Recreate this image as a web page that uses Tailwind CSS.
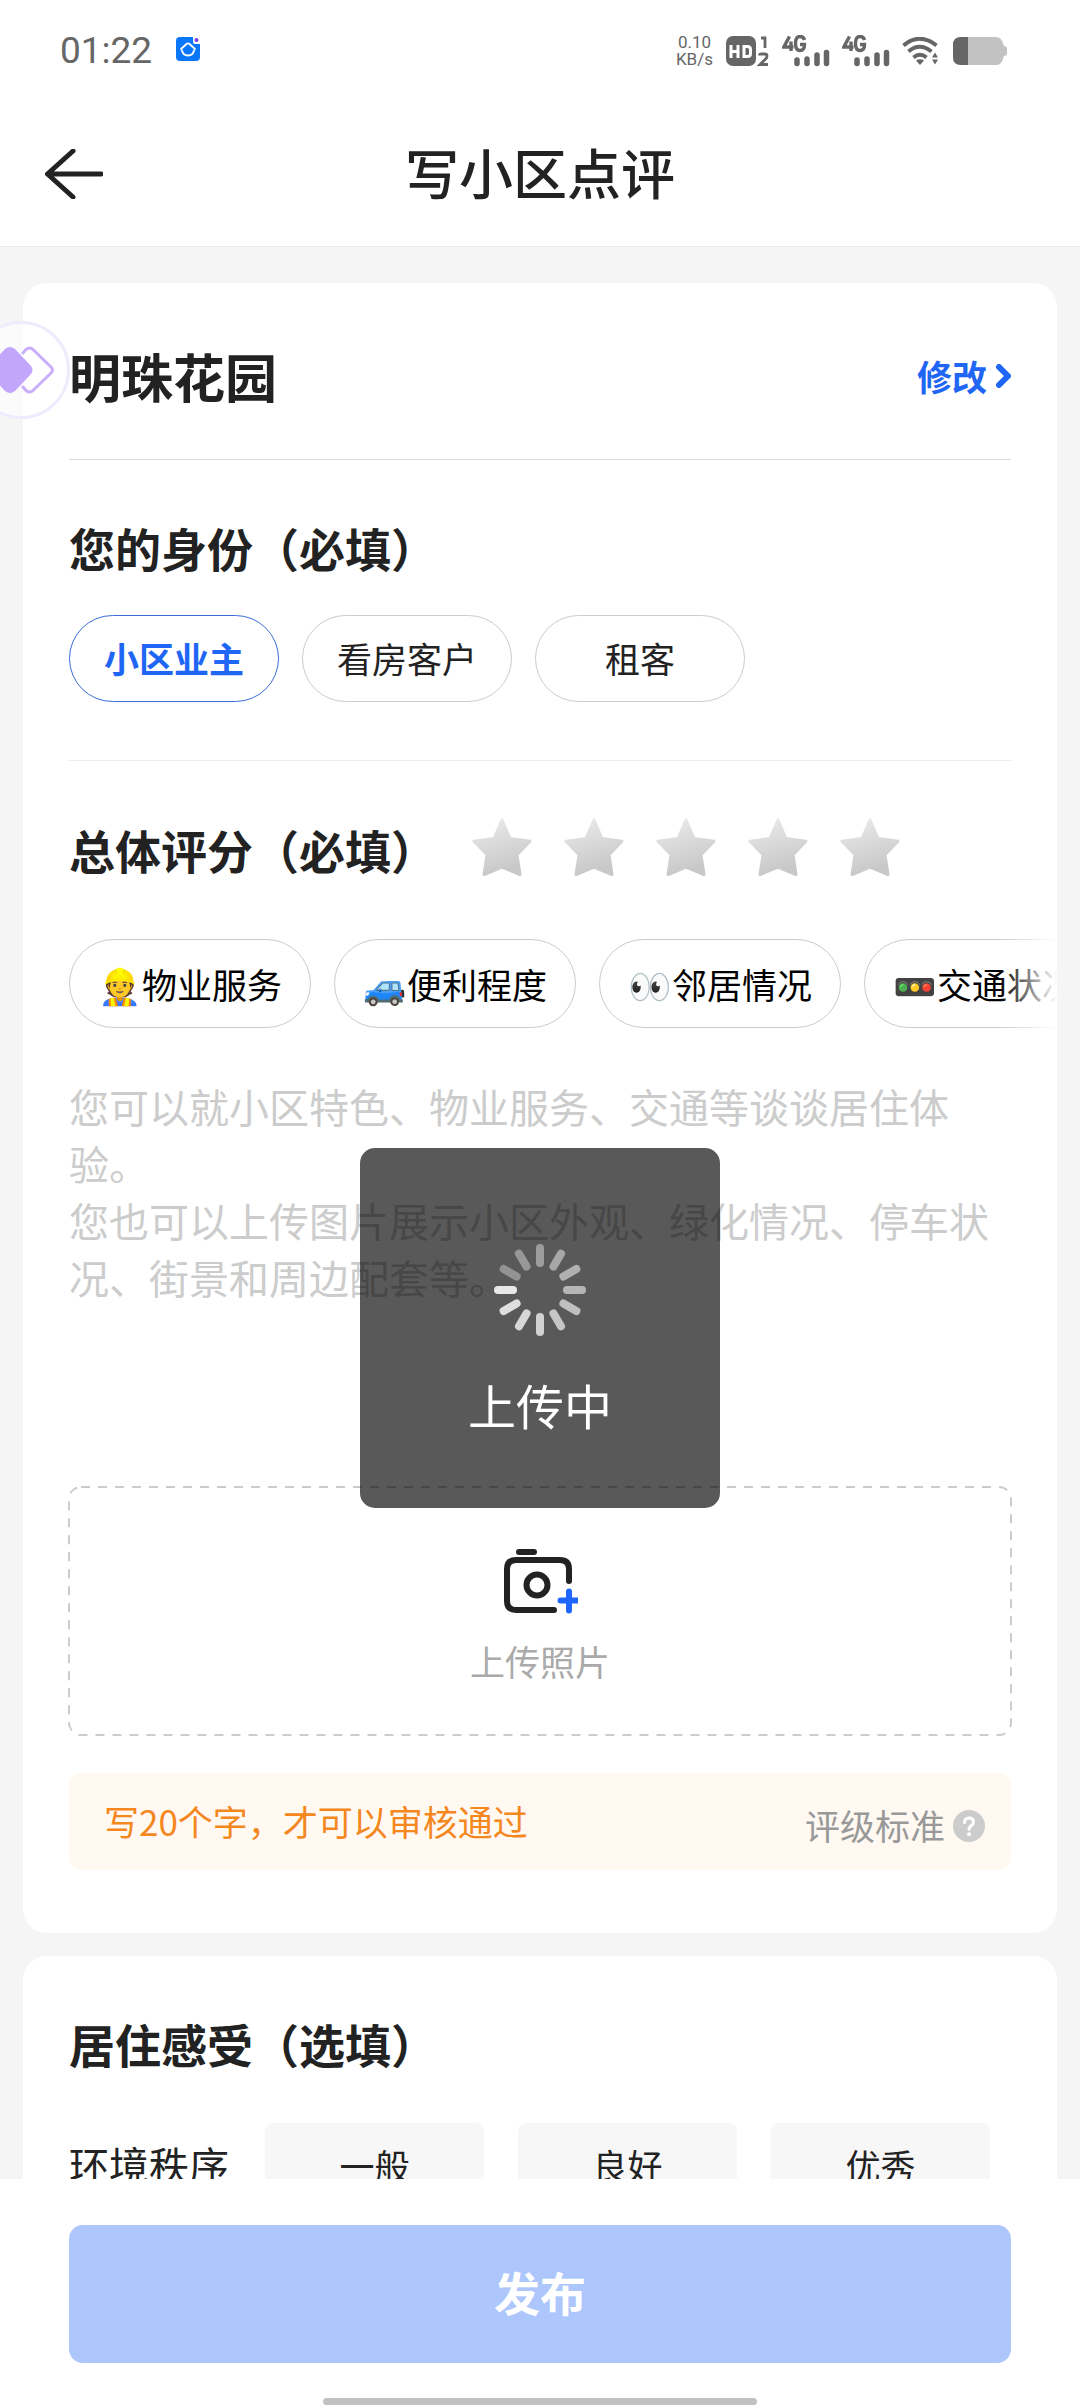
<!DOCTYPE html>
<html lang="zh-CN">
<head>
<meta charset="utf-8">
<meta name="viewport" content="width=device-width, initial-scale=1">
<title>写小区点评</title>
<script src="https://cdn.jsdelivr.net/npm/@tailwindcss/browser@4"></script>
</head>
<body class="flex h-screen flex-col bg-white font-['Noto_Sans_CJK_SC',sans-serif] text-[#222222]">

<!-- Status bar -->
<div class="flex h-[102px] shrink-0 items-center justify-between pl-[60px] pr-[73px] font-['Roboto','Noto_Sans_CJK_SC',sans-serif] text-[#666666]">
  <div class="flex items-center gap-6">
    <span class="text-[37px] leading-[44px]">01:22</span>
    <svg class="mb-1 h-6 w-6" viewBox="0 0 24 24" aria-hidden="true">
      <rect width="24" height="24" rx="4" fill="#0a77fb"/>
      <path d="M5 12l5.500-5q1.500-1.200 3 0l5.500 5" fill="none" stroke="#fff" stroke-width="1.800" stroke-linecap="round"/>
      <path d="M6 13.500q1 5 6 5t6-5" fill="none" stroke="#fff" stroke-width="1.800" stroke-linecap="round"/>
      <path d="M17 0h7v7h-5a2 2 0 0 1-2-2z" fill="#fff"/>
      <circle cx="20.500" cy="3" r="2" fill="#7a3cf0"/>
    </svg>
  </div>
  <div class="flex items-center">
    <div class="mr-[13px] flex flex-col text-center text-[17px] leading-[17px]"><span>0.10</span><span>KB/s</span></div>
    <svg class="mr-3 h-8 w-11" viewBox="0 0 44 32" aria-hidden="true">
      <rect x="0" y="1" width="30" height="30" rx="7" fill="#666"/>
      <path d="M5 10v13M12 10v13M5 16.500h7M18 11.500v10h3.500q3 0 3-3v-4q0-3-3-3z" fill="none" stroke="#fff" stroke-width="3"/>
      <path d="M35 3h4v10M33.500 20.500q0-1.500 2-1.500h3q2.500 0 2.500 2t-2 3.500l-5 5h8" fill="none" stroke="#666" stroke-width="2.800"/>
    </svg>
    <svg class="mr-3 h-8 w-12" viewBox="0 0 48 32" aria-hidden="true">
      <path d="M7.500 1.500L1.800 12h9.700M9 6.500V16M22.500 5q-1-3.500-4.500-3.500-4.500 0-4.500 7t4.500 7q4.500 0 4.500-6h-4.500" fill="none" stroke="#666" stroke-width="3.400"/>
      <path d="M15 25v3.500M25 24v4.500M35 20v8.500M44.500 17.500v11" stroke="#666" stroke-width="5.500" stroke-linecap="round"/>
    </svg>
    <svg class="mr-3 h-8 w-12" viewBox="0 0 48 32" aria-hidden="true">
      <path d="M7.500 1.500L1.800 12h9.700M9 6.500V16M22.500 5q-1-3.500-4.500-3.500-4.500 0-4.500 7t4.500 7q4.500 0 4.500-6h-4.500" fill="none" stroke="#666" stroke-width="3.400"/>
      <path d="M15 25v3.500M25 24v4.500M35 20v8.500M44.500 17.500v11" stroke="#666" stroke-width="5.500" stroke-linecap="round"/>
    </svg>
    <svg class="mr-[15px] h-7 w-9" viewBox="0 0 36 28" aria-hidden="true">
      <path d="M1.500 8.500q16-13.500 33 0M6.500 14.500q11-9.500 23 0M11.500 20.500q6.500-5.500 13 0" fill="none" stroke="#666" stroke-width="4"/>
      <path d="M14 23.500q4-2.500 8 0l-4 4.500zM33 15.500l3 5h-6zM33 27.500l3-5h-6z" fill="#666"/>
    </svg>
    <svg class="h-7 w-[54px]" viewBox="0 0 54 28" aria-hidden="true">
      <path d="M8 0h35q5 0 7 6l1 3q3 0 3 3v4q0 3-3 3l-1 3q-2 6-7 6H8q-8 0-8-8V8q0-8 8-8z" fill="#c2c2c2"/>
      <path d="M15 0H8Q0 0 0 8v12q0 8 8 8h7z" fill="#666"/>
    </svg>
  </div>
</div>

<!-- Title bar -->
<header class="grid h-[145px] shrink-0 grid-cols-[1fr_auto_1fr] items-center border-b border-[#ebebeb] px-[45px]">
  <button type="button" aria-label="返回" class="justify-self-start">
    <svg class="h-[50px] w-[58px]" viewBox="0 0 58 50" fill="none" stroke="#222" stroke-width="5" stroke-linecap="round" stroke-linejoin="round" aria-hidden="true"><path d="M28 2L2.500 25 28 48M3 25h53"/></svg>
  </button>
  <h1 class="pb-1 text-[54px] font-medium leading-[80px]">写小区点评</h1>
</header>

<main class="min-h-0 flex-1 overflow-y-auto bg-[#f5f5f5] px-[23px] pt-9 [scrollbar-width:none]">
  <!-- Review card -->
  <section class="rounded-[24px] bg-white px-[46px] pb-[63px]">
    <div class="flex items-center justify-between border-b border-[#dcdcdc] pb-[53px] pt-[63px]">
      <h2 class="text-[52px] font-bold leading-[60px]">明珠花园</h2>
      <a href="#community" class="flex items-center gap-2 text-[35px] font-bold leading-[60px] text-[#1f66f5]">修改
        <svg class="h-6 w-4" viewBox="0 0 16 24" fill="none" stroke="currentColor" stroke-width="6" stroke-linecap="round" stroke-linejoin="round" aria-hidden="true"><path d="M4 3l9 9-9 9"/></svg>
      </a>
    </div>

    <fieldset class="border-b border-[#ebebeb] pb-[58px] pt-[57px]">
      <legend class="float-left w-full text-[46px] font-bold leading-[60px]">您的身份（必填）</legend>
      <div class="clear-both flex gap-[23px] pt-[38px] text-[35px]">
        <label class="flex h-[87px] w-[210px] items-center justify-center rounded-full border border-[#cccccc] has-checked:border-[#3a6fd8] has-checked:font-bold has-checked:text-[#1f66f5]"><input type="radio" name="identity" class="sr-only" checked>小区业主</label>
        <label class="flex h-[87px] w-[210px] items-center justify-center rounded-full border border-[#cccccc] has-checked:border-[#3a6fd8] has-checked:font-bold has-checked:text-[#1f66f5]"><input type="radio" name="identity" class="sr-only">看房客户</label>
        <label class="flex h-[87px] w-[210px] items-center justify-center rounded-full border border-[#cccccc] has-checked:border-[#3a6fd8] has-checked:font-bold has-checked:text-[#1f66f5]"><input type="radio" name="identity" class="sr-only">租客</label>
      </div>
    </fieldset>

    <div class="flex items-center pt-[56px]">
      <h3 class="w-[403px] shrink-0 text-[46px] font-bold leading-[60px]">总体评分（必填）</h3>
      <div class="flex gap-8 pb-1" id="stars"></div>
    </div>

    <div class="relative -mx-[46px] mt-[58px]">
      <div class="flex gap-[23px] overflow-hidden px-[46px] text-[35px] text-black">
        <button type="button" class="flex h-[89px] w-[242px] shrink-0 items-center justify-center whitespace-nowrap rounded-full border border-[#cccccc] pt-0.5">👷物业服务</button>
        <button type="button" class="flex h-[89px] w-[242px] shrink-0 items-center justify-center whitespace-nowrap rounded-full border border-[#cccccc] pt-0.5">🚙便利程度</button>
        <button type="button" class="flex h-[89px] w-[242px] shrink-0 items-center justify-center whitespace-nowrap rounded-full border border-[#cccccc] pt-0.5">👀邻居情况</button>
        <button type="button" class="flex h-[89px] w-[242px] shrink-0 items-center justify-center whitespace-nowrap rounded-full border border-[#cccccc] pt-0.5">🚥交通状况</button>
      </div>
      <div class="pointer-events-none absolute inset-y-0 right-0 w-[58px] bg-linear-to-r from-white/0 to-white"></div>
    </div>

    <textarea aria-label="点评内容" class="mt-[50px] block h-[374px] w-full resize-none overflow-hidden text-[40px] leading-[57px] outline-none placeholder:text-[#cccccc]" placeholder="您可以就小区特色、物业服务、交通等谈谈居住体验。&#10;您也可以上传图片展示小区外观、绿化情况、停车状况、街景和周边配套等。"></textarea>

    <button type="button" class="relative mt-[35px] flex h-[248px] w-full flex-col items-center justify-center gap-[22px] pt-3">
      <svg class="absolute inset-0 h-full w-full overflow-visible" fill="none" stroke="#cccccc" stroke-width="2" stroke-dasharray="9 8" aria-hidden="true"><rect width="100%" height="100%" rx="12"/></svg>
      <svg class="h-[66px] w-[76px]" viewBox="0 0 76 66" fill="none" stroke="#222" stroke-width="6" stroke-linecap="round" stroke-linejoin="round" aria-hidden="true">
        <path d="M17 4h15M67 33V21q0-9-9-9H14q-9 0-9 9v32q0 9 9 9h38"/>
        <circle cx="35" cy="37" r="10.500"/>
        <path d="M58.500 52.500h17M67 43.500v19" stroke="#1f66ff"/>
      </svg>
      <span class="text-[35px] leading-[50px] text-[#aaaaaa]">上传照片</span>
    </button>

    <div class="mt-[38px] flex h-[97px] items-center justify-between rounded-xl bg-[#fff9f2] pl-[35px] pr-[26px] text-[35px]">
      <p class="text-[#f5871f]">写20个字，才可以审核通过</p>
      <a href="#standard" class="flex items-center gap-2 pt-2 text-[#999999]">评级标准
        <svg class="h-8 w-8" viewBox="0 0 32 32" aria-hidden="true"><circle cx="16" cy="16" r="16" fill="#cccccc"/><path d="M11.500 12.500q0-4.500 4.500-4.500t4.500 4q0 2.200-2.300 3.700T16 19.500" fill="none" stroke="#fff" stroke-width="3" stroke-linecap="round"/><circle cx="16" cy="24.300" r="2" fill="#fff"/></svg>
      </a>
    </div>
  </section>

  <!-- Living experience card -->
  <section class="mt-[23px] rounded-[24px] bg-white px-[46px] pb-[60px] pt-[57px]">
    <h3 class="text-[46px] font-bold leading-[60px]">居住感受（选填）</h3>
    <div role="radiogroup" aria-labelledby="order-label" class="mt-[50px] flex items-center">
      <span id="order-label" class="w-[196px] shrink-0 pb-1.5 text-[40px]">环境秩序</span>
      <div class="flex gap-[34px] text-[35px]">
        <label class="flex h-[87px] w-[219px] items-center justify-center rounded-lg bg-[#f7f7f7] pb-0.5"><input type="radio" name="order" class="sr-only">一般</label>
        <label class="flex h-[87px] w-[219px] items-center justify-center rounded-lg bg-[#f7f7f7] pb-0.5"><input type="radio" name="order" class="sr-only">良好</label>
        <label class="flex h-[87px] w-[219px] items-center justify-center rounded-lg bg-[#f7f7f7] pb-0.5"><input type="radio" name="order" class="sr-only">优秀</label>
      </div>
    </div>
  </section>
</main>

<!-- Submit bar -->
<footer class="flex shrink-0 flex-col items-center bg-white px-[69px] pb-[3px] pt-[46px]">
  <button type="button" class="h-[138px] w-full rounded-[14px] bg-[#adc6fc] pb-1.5 text-[46px] font-bold text-white">发布</button>
  <div class="mt-[35px] h-[7px] w-[46%] rounded-full bg-[#c1c1c1]"></div>
</footer>

<!-- Floating assistant handle -->
<div class="fixed -left-[28px] top-[321px] flex h-[98px] w-[98px] items-center justify-center rounded-full border-3 border-[#efeafc] bg-white/60">
  <svg class="h-12 w-[66px]" viewBox="0 0 66 48" fill="none" stroke="#c9aefb" stroke-width="3" stroke-linecap="round" stroke-linejoin="round" aria-hidden="true">
    <path d="M17 3q5-4 10 0l16 17q3 4 0 8L27 45q-5 4-10 0L1 28q-3-4 0-8z" fill="#c2a6fb" stroke="none"/>
    <path d="M35 7l3-3.500q4-3 7 0L63 21q3 3 0 6L45 44.500q-3 3-7 0L35 41"/>
  </svg>
</div>

<!-- Upload progress toast -->
<div role="status" class="fixed left-1/2 top-[1148px] flex h-[360px] w-[360px] -translate-x-1/2 flex-col items-center rounded-[15px] bg-black/65 pt-24">
  <svg class="h-[92px] w-[92px]" viewBox="-46 -46 92 92" stroke="#fff" stroke-width="8" stroke-linecap="round" id="spinner" aria-hidden="true"></svg>
  <span class="mt-8 text-[48px] leading-[72px] text-white">上传中</span>
</div>

<script>
  // Five rating stars
  const stars = document.getElementById('stars');
  for (let i = 1; i <= 5; i++) {
    const b = document.createElement('button');
    b.type = 'button';
    b.setAttribute('aria-label', i + '星');
    b.innerHTML = '<svg class="block h-[60px] w-[60px]" viewBox="0 0 60 60"><defs><linearGradient id="silver' + i + '" x1="0" y1="0" x2="0.300" y2="1"><stop offset="0" stop-color="#ebebeb"/><stop offset="1" stop-color="#c8c8c8"/></linearGradient></defs><path d="M30 3l8 18.500 20 2.700-13 13.500 3 19.800L30 50l-18 7.500 3-19.800L2 24.200l20-2.700z" fill="url(#silver' + i + ')" stroke="url(#silver' + i + ')" stroke-width="3" stroke-linejoin="round"/></svg>';
    stars.append(b);
  }
  // Twelve spinner spokes, clockwise from the top
  const shade = [.4, .47, .52, .56, .61, .66, .72, .76, .8, .86, .35, .38];
  document.getElementById('spinner').innerHTML = shade.map((o, i) =>
    '<path d="M0-42V-27" stroke-opacity="' + o + '" transform="rotate(' + i * 30 + ')"/>').join('');
</script>
</body>
</html>
